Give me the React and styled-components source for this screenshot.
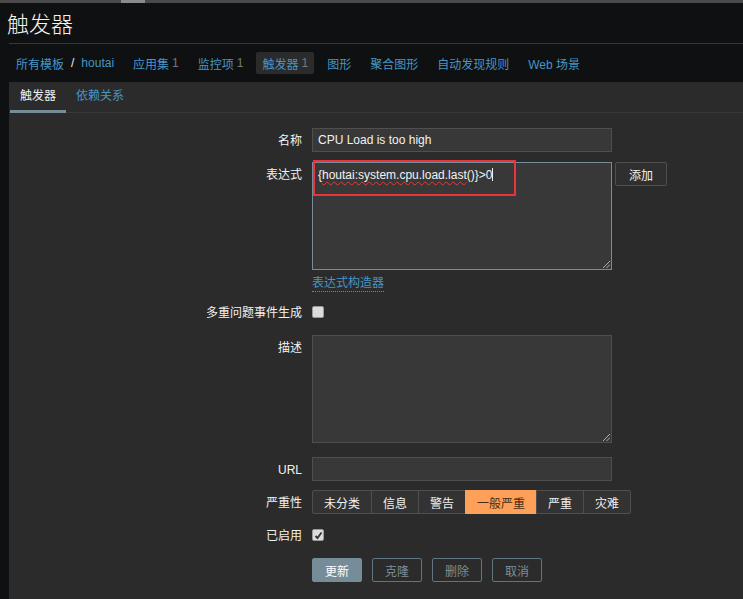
import React from "react"
import styled, { createGlobalStyle } from "styled-components"

const GlobalStyle = createGlobalStyle`
  html, body {
    margin: 0;
    padding: 0;
    background: #0e1012;
    font-family: "Liberation Sans", "Noto Sans CJK SC", sans-serif;
    font-size: 12px;
    color: #f2f2f2;
  }
`

const Page = styled.div`
  width: 743px;
  height: 599px;
  overflow: hidden;
  background: #0e1012;
`

const TopStrip = styled.div`
  height: 3px;
  background: #4a4a4a;
  display: flex;
`

const StripThumb = styled.span`
  margin-left: 121px;
  width: 24px;
  background: #8a8a8a;
`

const Header = styled.div`
  padding-left: 9px;
`

const Title = styled.h1`
  margin: 0;
  padding: 7px 0 3px;
  font-size: 22px;
  line-height: 30px;
  font-weight: 300;
  color: #f2f2f2;
  text-indent: -2px;
  border-bottom: 1px solid #383838;
`

const Nav = styled.ul`
  list-style: none;
  margin: 8px 0 0;
  padding: 0 0 0 1px;
  display: flex;
  gap: 7px;
  height: 22px;
`

const NavItem = styled.li`
  display: flex;
  align-items: center;
  padding: 0 6px;
  height: 22px;
  border-radius: 2px;
  color: #4796c4;
  background: ${p => (p.$active ? "#2b2b2b" : "transparent")};
`

const Sep = styled.span`
  color: #f2f2f2;
  margin: 0 7px;
`

const Count = styled.span`
  color: #787878;
  margin-left: 3px;
`

const Panel = styled.div`
  margin: 8px 0 0 9px;
  background: #2b2b2b;
  height: 600px;
`

const TabBar = styled.div`
  display: flex;
  padding-left: 1px;
  border-bottom: 1px solid #383838;
`

const Tab = styled.div`
  padding: 0 10px;
  line-height: 28px;
  margin-bottom: -1px;
  border-bottom: 3px solid ${p => (p.$active ? "#768d99" : "transparent")};
  color: ${p => (p.$active ? "#f2f2f2" : "#4796c4")};
`

const Form = styled.div`
  padding-top: 15px;
`

const Row = styled.div`
  display: grid;
  grid-template-columns: 293px auto;
  column-gap: 10px;
  margin-top: ${p => p.$mt || 0}px;
`

const Label = styled.div`
  text-align: right;
  line-height: 24px;
  padding-top: 1px;
  height: 23px;
  color: #f2f2f2;
`

const Field = styled.div`
  display: flex;
  align-items: ${p => (p.$center ? "center" : "flex-start")};
  min-height: 24px;
`

const Input = styled.div`
  box-sizing: border-box;
  width: 300px;
  height: 24px;
  padding: 0 5px;
  line-height: 22px;
  background: #383838;
  border: 1px solid #4f4f4f;
  font-size: 12px;
  color: #f2f2f2;
`

const Area = styled.div`
  position: relative;
  box-sizing: border-box;
  width: 300px;
  height: ${p => p.$h}px;
  padding: 4px 5px;
  line-height: 17px;
  background: #383838;
  border: 1px solid ${p => (p.$focus ? "#768d99" : "#4f4f4f")};
  color: #f2f2f2;
`

const Grip = styled.svg`
  position: absolute;
  right: 1px;
  bottom: 1px;
`

const Wavy = styled.span`
  text-decoration: underline wavy #e53935;
  text-decoration-thickness: 1px;
  text-underline-offset: 2px;
`

const Caret = styled.span`
  display: inline-block;
  width: 1px;
  height: 13px;
  background: #f2f2f2;
  vertical-align: -2px;
`

const Highlight = styled.div`
  position: absolute;
  left: 0;
  top: -3px;
  width: 203px;
  height: 36px;
  box-sizing: border-box;
  border: 2px solid #e8343a;
  pointer-events: none;
`

const ExprCol = styled.div`
  display: flex;
  flex-direction: column;
`

const Builder = styled.a`
  align-self: flex-start;
  margin-top: 6px;
  color: #4796c4;
  line-height: 15px;
  border-bottom: 1px dotted #4796c4;
  text-decoration: none;
`

const AltButton = styled.button`
  margin-left: 3px;
  height: 24px;
  padding: 0 13px;
  background: #2f2f2f;
  border: 1px solid #4f4f4f;
  border-radius: 2px;
  font-family: inherit;
  font-size: 12px;
  color: #f2f2f2;
`

const Check = styled.span`
  box-sizing: border-box;
  display: inline-flex;
  align-items: center;
  justify-content: center;
  width: 12px;
  height: 12px;
  background: #dcdcdc;
  border: 1px solid #9a9a9a;
  border-radius: 2px;
`

const SevGroup = styled.div`
  display: flex;
  height: 24px;
`

const Sev = styled.div`
  display: flex;
  align-items: center;
  padding: 0 11px;
  margin-left: -1px;
  border: 1px solid ${p => (p.$on ? "#ffa059" : "#4f4f4f")};
  background: ${p => (p.$on ? "#ffa059" : "#333333")};
  color: ${p => (p.$on ? "#4a2a12" : "#f2f2f2")};
  &:first-child {
    margin-left: 0;
    border-radius: 2px 0 0 2px;
  }
  &:last-child {
    border-radius: 0 2px 2px 0;
  }
`

const Actions = styled.div`
  display: flex;
  gap: 10px;
`

const Button = styled.button`
  height: 24px;
  padding: 0 12px;
  border-radius: 2px;
  font-family: inherit;
  font-size: 12px;
  border: 1px solid ${p => (p.$primary ? "#768d99" : "#5f7581")};
  background: ${p => (p.$primary ? "#768d99" : "transparent")};
  color: ${p => (p.$primary ? "#ffffff" : "#7b8f99")};
`

const nav = [
  { text: "应用集", count: 1 },
  { text: "监控项", count: 1 },
  { text: "触发器", count: 1, active: true },
  { text: "图形" },
  { text: "聚合图形" },
  { text: "自动发现规则" },
  { text: "Web 场景" },
]

const severities = ["未分类", "信息", "警告", "一般严重", "严重", "灾难"]

function ResizeGrip() {
  return (
    <Grip width="8" height="8" viewBox="0 0 8 8">
      <path d="M1 8 L8 1 M4.5 8 L8 4.5" stroke="#b0b0b0" strokeWidth="1" />
    </Grip>
  )
}

export default function App() {
  return (
    <Page>
      <GlobalStyle />
      <TopStrip>
        <StripThumb />
      </TopStrip>
      <Header>
        <Title>触发器</Title>
        <Nav>
          <NavItem>
            所有模板<Sep>/</Sep>houtai
          </NavItem>
          {nav.map(n => (
            <NavItem key={n.text} $active={n.active}>
              {n.text}
              {n.count && <Count>{n.count}</Count>}
            </NavItem>
          ))}
        </Nav>
      </Header>

      <Panel>
        <TabBar>
          <Tab $active>触发器</Tab>
          <Tab>依赖关系</Tab>
        </TabBar>

        <Form>
          <Row>
            <Label>名称</Label>
            <Field>
              <Input>CPU Load is too high</Input>
            </Field>
          </Row>

          <Row $mt={10}>
            <Label>表达式</Label>
            <Field>
              <ExprCol>
                <Area $h={108} $focus>
                  {"{"}
                  <Wavy>houtai:system.cpu.load.last</Wavy>
                  {"()}>0"}
                  <Caret />
                  <Highlight />
                  <ResizeGrip />
                </Area>
                <Builder>表达式构造器</Builder>
              </ExprCol>
              <AltButton>添加</AltButton>
            </Field>
          </Row>

          <Row $mt={8}>
            <Label>多重问题事件生成</Label>
            <Field $center>
              <Check />
            </Field>
          </Row>

          <Row $mt={11}>
            <Label>描述</Label>
            <Field>
              <Area $h={108}>
                <ResizeGrip />
              </Area>
            </Field>
          </Row>

          <Row $mt={14}>
            <Label>URL</Label>
            <Field>
              <Input />
            </Field>
          </Row>

          <Row $mt={9}>
            <Label>严重性</Label>
            <Field>
              <SevGroup>
                {severities.map(s => (
                  <Sev key={s} $on={s === "一般严重"}>
                    {s}
                  </Sev>
                ))}
              </SevGroup>
            </Field>
          </Row>

          <Row $mt={9}>
            <Label>已启用</Label>
            <Field $center>
              <Check>
                <svg width="9" height="9" viewBox="0 0 9 9">
                  <path d="M1.5 5 L3.5 7 L7.5 1.5" stroke="#333" strokeWidth="1.8" fill="none" />
                </svg>
              </Check>
            </Field>
          </Row>

          <Row $mt={11}>
            <Label />
            <Actions>
              <Button $primary>更新</Button>
              <Button>克隆</Button>
              <Button>删除</Button>
              <Button>取消</Button>
            </Actions>
          </Row>
        </Form>
      </Panel>
    </Page>
  )
}
